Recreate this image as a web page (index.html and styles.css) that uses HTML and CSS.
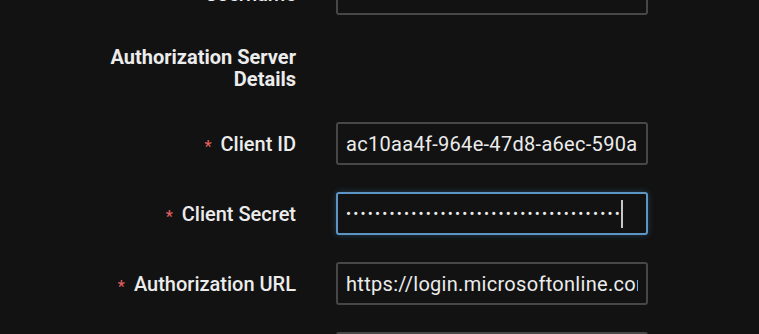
FILE: index.html
```html
<!DOCTYPE html>
<html lang="en">
<head>
    <meta charset="UTF-8">
    <meta name="viewport" content="width=device-width, initial-scale=1.0">
    <title>Authorization Settings</title>
    <link rel="stylesheet" href="styles.css">
</head>
<body>
    <form class="settings-form">
        <div class="form-row">
            <label class="form-label">Username</label>
            <div class="field"><span class="field-value"></span></div>
        </div>

        <div class="section-title">Authorization Server<br>Details</div>

        <div class="form-row">
            <label class="form-label required">Client ID</label>
            <div class="field"><span class="field-value">ac10aa4f-964e-47d8-a6ec-590a3c1e8b27</span></div>
        </div>

        <div class="form-row">
            <label class="form-label required">Client Secret</label>
            <div class="field focused">
                <span class="field-value secret">&#8226;&#8226;&#8226;&#8226;&#8226;&#8226;&#8226;&#8226;&#8226;&#8226;&#8226;&#8226;&#8226;&#8226;&#8226;&#8226;&#8226;&#8226;&#8226;&#8226;&#8226;&#8226;&#8226;&#8226;&#8226;&#8226;&#8226;&#8226;&#8226;&#8226;&#8226;&#8226;&#8226;&#8226;&#8226;&#8226;&#8226;&#8226;</span><span class="caret"></span>
            </div>
        </div>

        <div class="form-row">
            <label class="form-label required">Authorization URL</label>
            <div class="field"><span class="field-value">https://login.microsoftonline.com/common/oauth2/v2.0/authorize</span></div>
        </div>

        <div class="form-row">
            <label class="form-label required">Token URL</label>
            <div class="field"><span class="field-value"></span></div>
        </div>
    </form>
</body>
</html>
```

FILE: styles.css
```css
body {
    margin: 0;
    padding: 0;
    background-color: #121212;
    font-family: Roboto, "Noto Sans", sans-serif;
    color: #ececec;
    overflow: hidden;
}

.settings-form {
    display: flex;
    flex-direction: column;
    gap: 27px;
    margin-top: -28px;
}

.form-row {
    display: grid;
    grid-template-columns: 296px 312px;
    column-gap: 40px;
    align-items: center;
}

.form-label {
    text-align: right;
    font-size: 20px;
    font-weight: 500;
    color: #ececec;
}

/* Red star in front of required labels */
.form-label.required::before {
    content: "*";
    color: #e06060;
    font-size: 16px;
    margin-right: 9px;
    position: relative;
    top: 1px;
}

.section-title {
    width: 296px;
    text-align: right;
    font-size: 20px;
    font-weight: 700;
    line-height: 22px;
    margin: 4px 0 5px;
}

.field {
    box-sizing: border-box;
    height: 43px;
    border: 2px solid #474747;
    border-radius: 3px;
    background-color: #121212;
    padding: 0 8px;
    display: flex;
    align-items: center;
    overflow: hidden;
}

.field.focused {
    border-color: #5d95c4;
    box-shadow: 0 0 6px rgba(70, 140, 200, 0.35);
}

.field-value {
    font-size: 20px;
    letter-spacing: 0.3px;
    color: #ececec;
    white-space: nowrap;
    overflow: hidden;
}

.field-value.secret {
    font-size: 15px;
    letter-spacing: 2.2px;
    overflow: visible;
}

.caret {
    display: inline-block;
    width: 2px;
    height: 28px;
    background-color: #c8c8c8;
    margin-left: -1px;
}
```
